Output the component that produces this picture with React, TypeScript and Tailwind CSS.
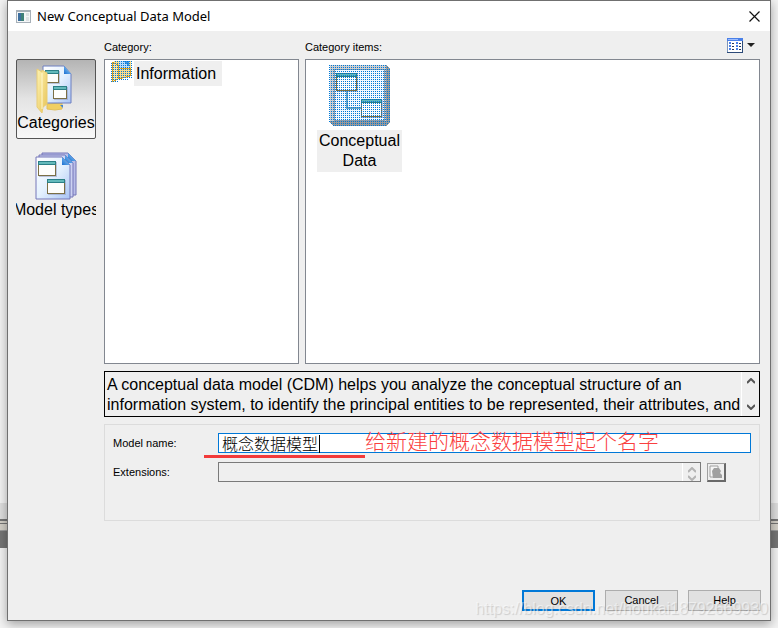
import React, { useState } from 'react';

const sans = "font-['Liberation_Sans','Noto_Sans_CJK_SC',sans-serif]";

function Pane({ x, y, w = 18, h = 14 }: { x: number; y: number; w?: number; h?: number }) {
  return (
    <g>
      <rect x={x + 1} y={y + 1} width={w} height={h} fill="#8b93b8" opacity="0.5" />
      <rect x={x} y={y} width={w} height={h} fill="#7b6f45" />
      <rect x={x + 1} y={y + 4} width={w - 2} height={h - 5} fill="#fdfdfb" />
      <rect x={x} y={y} width={w} height="4" fill="#2b7f86" />
      <rect x={x + 1} y={y + 1} width={w - 2} height="2" fill="#63b9ba" />
    </g>
  );
}

function PageGradients() {
  return (
    <defs>
      <linearGradient id="page" x1="0" y1="0" x2="1" y2="1">
        <stop offset="0" stopColor="#ffffff" />
        <stop offset="0.5" stopColor="#e4f1fe" />
        <stop offset="1" stopColor="#a9c4f4" />
      </linearGradient>
      <linearGradient id="folder" x1="0" y1="0" x2="1" y2="1">
        <stop offset="0" stopColor="#fdf3b4" />
        <stop offset="1" stopColor="#e8c456" />
      </linearGradient>
      <linearGradient id="fold" x1="0" y1="1" x2="1" y2="0">
        <stop offset="0" stopColor="#1d6fd0" />
        <stop offset="1" stopColor="#9bdcff" />
      </linearGradient>
    </defs>
  );
}

function CategoriesIcon() {
  return (
    <svg width="48" height="48" viewBox="0 0 48 48" aria-hidden="true">
      <PageGradients />
      <path d="M15 39l15-1v6l-7 1-8-1z" fill="#f0cf63" stroke="#e2c05a" />
      <path d="M28 40h3v3z" fill="#3f86d8" />
      <path d="M11 1h21l7 8v29H11z" fill="url(#page)" stroke="#6d7ec0" />
      <path d="M32 1v8h7z" fill="url(#fold)" />
      <Pane x={13} y={5} w={14} h={13} />
      <Pane x={21} y={21} w={14} h={13} />
      <path d="M5 4l5 3v-2l5 3v31l-4 3-1 6-5-6z" fill="url(#folder)" stroke="#e8cc74" />
      <path d="M10 8v36" stroke="#fff8cf" />
    </svg>
  );
}

function ModelTypesIcon() {
  return (
    <svg width="48" height="48" viewBox="0 0 48 48" aria-hidden="true">
      <PageGradients />
      <path d="M10 1h26l8 8v34H10z" fill="#b9bde8" stroke="#7477b8" />
      <path d="M36 1v8h8z" fill="url(#fold)" />
      <path d="M7 3h26l8 8v34H7z" fill="#cdd2f2" stroke="#7477b8" />
      <path d="M33 3v8h8z" fill="url(#fold)" />
      <path d="M4 5h26l8 8v34H4z" fill="url(#page)" stroke="#7477b8" />
      <path d="M30 5v8h8z" fill="url(#fold)" />
      <Pane x={6} y={9} w={18} h={15} />
      <Pane x={15} y={27} w={18} h={15} />
    </svg>
  );
}

function Dither({ id }: { id: string }) {
  return (
    <pattern id={id} width="2" height="2" patternUnits="userSpaceOnUse">
      <rect width="1" height="1" fill="#0078d7" />
    </pattern>
  );
}

function FolderIcon() {
  return (
    <svg width="22" height="22" viewBox="0 0 22 22" shapeRendering="crispEdges" aria-hidden="true">
      <defs>
        <Dither id="dither-folder" />
      </defs>
      <path d="M1 1l4-1h15v15l-4 2-8 1-5 3H1z" fill="#f7dc8c" />
      <path d="M8 0h9l1 7-10 2z" fill="#b9dcfa" />
      <path d="M1 2l6 2v14l-4 3H1z" fill="#fbe6a4" />
      <path d="M1 1l6 3v14M7 9l4-2h9l-1 8-12 3M1 1v20l6-3" fill="none" stroke="#dca020" strokeWidth="1" />
      <path d="M13 0h5v6z" fill="#3a92e0" />
      <path d="M0 1h4v-1h17v17h-4v2h-9v2H0z" fill="url(#dither-folder)" />
    </svg>
  );
}

function ConceptualIcon() {
  return (
    <svg width="62" height="62" viewBox="0 0 62 62" shapeRendering="crispEdges" aria-hidden="true">
      <defs>
        <Dither id="dither-model" />
      </defs>
      <path d="M1 0h56l4 3v54l-3 4H4l-3-3z" fill="#9a9a9a" />
      <path d="M1 0h56v56H1z" fill="#cfcfcf" />
      <path d="M5 4h51v52H5z" fill="#8f9dab" />
      <path d="M6 5h49v50H6z" fill="#f4f9fe" />
      <path d="M18 25v18h14" fill="none" stroke="#6aa5c4" strokeWidth="2" />
      <Pane x={7} y={8} w={21} h={18} />
      <Pane x={32} y={34} w={21} h={18} />
      <path d="M0 0h57l4 3v54l-3 4H3l-3-3z" fill="url(#dither-model)" />
    </svg>
  );
}

function Chevron({ up = false }: { up?: boolean }) {
  return (
    <svg width="8" height="6" viewBox="0 0 8 6" aria-hidden="true">
      <path d={up ? 'M0 5l4-4 4 4' : 'M0 1l4 4 4-4'} fill="none" stroke="currentColor" strokeWidth="2" />
    </svg>
  );
}

function Backdrop() {
  return (
    <div className="absolute inset-0 flex flex-col bg-[#f3f3f3]" aria-hidden="true">
      <div className="h-[503px]" />
      <div className="h-4 bg-[#dedede]" />
      <div className="h-0.5 bg-[#757575]" />
      <div className="h-0.5 bg-[#d4d0c8]" />
      <div className="h-px bg-[#757575]" />
      <div className="h-1.5 bg-[#d4d0c8]" />
      <div className="h-px bg-[#9c9c9c]" />
      <div className="h-[17px] bg-[#757575]" />
    </div>
  );
}

export default function App() {
  const [name, setName] = useState('概念数据模型');

  return (
    <div className={`relative min-h-screen overflow-hidden px-[7px] text-[11px] text-black ${sans}`}>
      <Backdrop />

      <main className="relative border border-[#707070] bg-[#efefef] shadow-[0_3px_10px_rgba(0,0,0,0.35)]">
        <header className="flex h-[30px] items-center bg-white pl-2 pr-2">
          <svg width="15" height="13" viewBox="0 0 15 13" shapeRendering="crispEdges" aria-hidden="true">
            <path d="M0 0h15v13H0z" fill="#a7b0b8" />
            <path d="M1 2h13v10H1z" fill="#f4f6f7" />
            <path d="M2 3h6v8H2z" fill="#3f8078" />
            <path d="M2 3h3v8H2z" fill="#3d6f9f" />
            <path d="M10 3h3v3h-3zM10 7h3v4h-3z" fill="#dde1e4" />
          </svg>
          <h1 className="ml-1.5 flex-1 font-['Noto_Sans',sans-serif] text-[13px] leading-5">New Conceptual Data Model</h1>
          <button type="button" aria-label="Close" className="p-0.5">
            <svg width="11" height="11" viewBox="0 0 11 11" aria-hidden="true">
              <path d="M.5.5l10 10M10.5.5l-10 10" stroke="#111" strokeWidth="1.2" />
            </svg>
          </button>
        </header>

        <div className="flex gap-2 pl-2 pr-[10px]">
          <nav className="flex w-20 shrink-0 flex-col gap-2 pt-7 text-[16px] leading-5">
            <button type="button" className="flex h-20 flex-col items-center overflow-hidden rounded-xs border border-[#555] bg-linear-to-b from-[#b4b4b4] via-[#e4e4e4] to-[#f8f8f8] pt-[5px]">
              <CategoriesIcon />
              <span>Categories</span>
            </button>
            <button type="button" className="flex h-20 flex-col items-center overflow-hidden pt-[5px]">
              <ModelTypesIcon />
              <span className="whitespace-nowrap">Model types</span>
            </button>
          </nav>

          <div className="min-w-0 flex-1">
            <div className="flex gap-1.5">
              <section className="w-[195px] shrink-0">
                <h2 className="flex h-7 items-center pt-1">Category:</h2>
                <ul className="h-[305px] border border-[#828790] bg-white pl-1.5 pt-px text-[16px]">
                  <li className="flex gap-px">
                    <FolderIcon />
                    <span className="h-[25px] bg-[#efefef] pl-0.5 pr-1.5 leading-[25px]">Information</span>
                  </li>
                </ul>
              </section>

              <section className="min-w-0 flex-1">
                <div className="flex h-7 items-center pt-1">
                  <h2 className="flex-1">Category items:</h2>
                  <button type="button" aria-label="View" className="flex items-center gap-1 pb-1 pr-[5px]">
                    <svg width="16" height="15" viewBox="0 0 16 15" shapeRendering="crispEdges" aria-hidden="true">
                      <path d="M0 0h16v15H0z" fill="#2c4a78" />
                      <path d="M0 0h15v14H0z" fill="#7b95bd" />
                      <path d="M1 3h14v11H1z" fill="#fff" />
                      <path d="M0 0h16v3H0z" fill="#4a80e8" />
                      <path d="M1 1h10v1H1z" fill="#9dbdff" />
                      <path d="M2 4h2v2H2zM2 7h2v2H2zM2 10h2v2H2zM9 4h2v2H9zM9 7h2v2H9zM9 10h2v2H9z" fill="#4a80e8" />
                      <path d="M5 5h2v1H5zM5 8h2v1H5zM5 11h2v1H5zM12 5h2v1h-2zM12 8h2v1h-2zM12 11h2v1h-2z" fill="#24365c" />
                    </svg>
                    <svg width="8" height="4" viewBox="0 0 8 4" aria-hidden="true">
                      <path d="M0 0h8L4 4z" fill="#222" />
                    </svg>
                  </button>
                </div>
                <ul className="h-[305px] border border-[#828790] bg-white pl-[11px] pt-[5px] text-[16px] leading-5">
                  <li className="flex w-[85px] flex-col items-center text-center">
                    <ConceptualIcon />
                    <span className="mt-[3px] w-full bg-[#efefef] pb-px pt-px">Conceptual Data</span>
                  </li>
                </ul>
              </section>
            </div>

            <div className="mt-[7px] flex h-[46px] border border-black text-[16px] leading-5">
              <p className="min-w-0 flex-1 overflow-hidden pl-0.5 pt-[3px]">
                A conceptual data model (CDM) helps you analyze the conceptual structure of an information system, to identify the principal entities to be represented, their attributes, and
              </p>
              <div className="flex w-[18px] flex-col items-center justify-between border-l border-white py-1.5 text-[#555]">
                <button type="button" aria-label="Scroll up" className="leading-none"><Chevron up /></button>
                <button type="button" aria-label="Scroll down" className="leading-none"><Chevron /></button>
              </div>
            </div>

            <form className="mt-[7px] h-[97px] border border-[#dcdcdc] px-2 pt-2">
              <div className="relative flex items-center">
                <label htmlFor="model-name" className="w-[105px]">Model name:</label>
                <input
                  id="model-name"
                  value={name}
                  onChange={(e) => setName(e.target.value)}
                  className="h-5 min-w-0 flex-1 border border-[#0078d7] bg-white pl-[3px] font-['Noto_Sans_CJK_SC',sans-serif] text-[16px] font-light leading-4 outline-none"
                />
                <span className="absolute left-[206px] top-0.5 h-[18px] w-px bg-black" />
                <span className="absolute left-[91px] top-[22px] h-[3px] w-[161px] bg-[#f23a3a]" />
                <span className="absolute left-[252px] top-[-5px] whitespace-nowrap font-['Noto_Sans_CJK_SC',sans-serif] text-[21px] font-light leading-6 text-[#fa4040]">
                  给新建的概念数据模型起个名字
                </span>
              </div>
              <div className="mt-[9px] flex items-center">
                <label htmlFor="extensions" className="w-[105px]">Extensions:</label>
                <div className="flex h-5 min-w-0 flex-1 border border-[#7a7a7a]">
                  <input id="extensions" disabled className="min-w-0 flex-1" />
                  <div className="flex w-[18px] flex-col items-center justify-between border-l border-white pt-1 text-[#b4b4b4]">
                    <Chevron up />
                    <Chevron />
                  </div>
                </div>
                <button type="button" disabled aria-label="Select extensions" className="ml-1.5 mr-[25px] flex size-[19px] items-center justify-center border border-b-2 border-r-2 border-b-[#696969] border-l-[#a0a0a0] border-r-[#696969] border-t-[#a0a0a0]">
                  <svg width="14" height="14" viewBox="0 0 14 14" aria-hidden="true">
                    <path d="M1 1h8v3h-1v8H1z" fill="#f6f6f6" stroke="#a0a0a0" />
                    <path d="M3 6l2-3h5l2 3-1 2 2 2v3H4z" fill="#a0a0a0" />
                  </svg>
                </button>
              </div>
            </form>
          </div>
        </div>

        <footer className="relative flex justify-end gap-2.5 pb-[9px] pr-[9px] pt-[69px]">
          <button type="button" className="h-[21px] w-[73px] border-2 border-[#0078d7] bg-[#e1e1e1] leading-4">OK</button>
          <button type="button" className="h-[21px] w-[73px] border border-[#adadad] bg-[#e1e1e1]">Cancel</button>
          <button type="button" className="h-[21px] w-[73px] border border-[#adadad] bg-[#e1e1e1]">Help</button>
          <span className="pointer-events-none absolute bottom-px right-0.5 text-[16px] leading-5 text-white/50 [text-shadow:1px_1px_1px_rgba(0,0,0,0.15)]">
            https://blog.csdn.net/houkai18792669930
          </span>
        </footer>
      </main>
    </div>
  );
}
